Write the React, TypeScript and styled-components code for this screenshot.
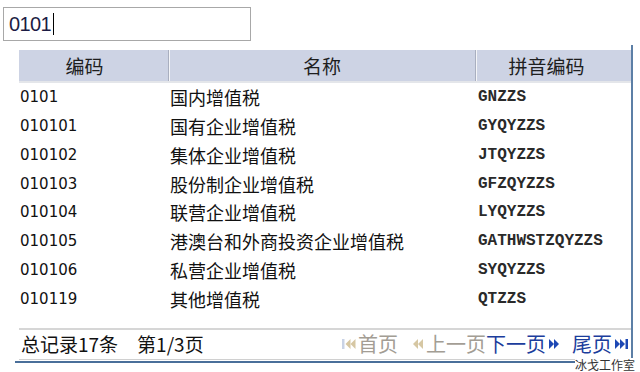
import React from 'react';
import styled, {createGlobalStyle} from 'styled-components';

const rows = [
  {code: '0101', name: '国内增值税', py: 'GNZZS'},
  {code: '010101', name: '国有企业增值税', py: 'GYQYZZS'},
  {code: '010102', name: '集体企业增值税', py: 'JTQYZZS'},
  {code: '010103', name: '股份制企业增值税', py: 'GFZQYZZS'},
  {code: '010104', name: '联营企业增值税', py: 'LYQYZZS'},
  {code: '010105', name: '港澳台和外商投资企业增值税', py: 'GATHWSTZQYZZS'},
  {code: '010106', name: '私营企业增值税', py: 'SYQYZZS'},
  {code: '010119', name: '其他增值税', py: 'QTZZS'},
];

const CJK = `"Noto Sans CJK SC", "Liberation Sans", sans-serif`;

function Arrows({dir, bar, off}: {dir: 'l' | 'r'; bar?: boolean; off?: boolean}) {
  const c = off ? '#d6c7a3' : '#1d48b4';
  const tri = dir === 'l'
    ? ['M6 1 L1 6 L6 11 Z', 'M11 1 L6 6 L11 11 Z']
    : ['M1 1 L6 6 L1 11 Z', 'M6 1 L11 6 L6 11 Z'];
  const w = bar ? 14 : 12;
  return (
    <svg width={w} height="12" viewBox={`0 0 ${w} 12`}>
      <g transform={bar && dir === 'l' ? 'translate(2.5 0)' : undefined}>
        {tri.map((d) => <path key={d} d={d} fill={c} />)}
      </g>
      {bar && <rect x={dir === 'l' ? 0 : 11.5} y="1" width="2.5" height="10" fill={off ? '#c9d3e6' : c} />}
    </svg>
  );
}

function App() {
  return (
    <Page>
      <GlobalStyle />
      <SearchBox>
        0101<Caret />
      </SearchBox>

      <Panel>
        <Inner>
          <HeadRow>
            <HeadCell $pr={18}>编码</HeadCell>
            <HeadCell>名称</HeadCell>
            <HeadCell $pr={14}>拼音编码</HeadCell>
          </HeadRow>

          <Body>
            {rows.map((r) => (
              <Row key={r.code}>
                <CodeCell>{r.code}</CodeCell>
                <NameCell>{r.name}</NameCell>
                <PyCell>{r.py}</PyCell>
              </Row>
            ))}
          </Body>

          <Footer>
            <Summary>
              <span>总记录17条</span>
              <span>第1/3页</span>
            </Summary>
            <Pager>
              <PageLink $off>
                <Arrows dir="l" bar off />首页
              </PageLink>
              <PageLink $off $gap={14}>
                <Arrows dir="l" off />上一页
              </PageLink>
              <PageLink>
                下一页<Arrows dir="r" />
              </PageLink>
              <PageLink $gap={12}>
                尾页<Arrows dir="r" bar />
              </PageLink>
            </Pager>
          </Footer>
        </Inner>
      </Panel>

      <Watermark>冰戈工作室</Watermark>
    </Page>
  );
}

const GlobalStyle = createGlobalStyle`
  body {
    margin: 0;
    background: #fff;
    font-family: "Liberation Sans", "Noto Sans CJK SC", sans-serif;
  }
`;

const Page = styled.div`
  position: relative;
  width: 640px;
  height: 372px;
  padding: 7px 0 0 3px;
  box-sizing: border-box;
  overflow: hidden;
`;

const SearchBox = styled.div`
  display: flex;
  align-items: center;
  width: 248px;
  height: 34px;
  box-sizing: border-box;
  border: 1px solid #a8a8a8;
  padding-left: 5px;
  font-size: 20px;
  letter-spacing: -0.6px;
  color: #1c1c44;
`;

const Caret = styled.span`
  display: inline-block;
  width: 1px;
  height: 22px;
  margin-left: 2px;
  background: #000;
`;

const Panel = styled.div`
  width: 618px;
  margin: 4px 0 0 12px;
  padding-top: 5px;
  box-sizing: border-box;
  border-right: 2px solid #5c7fa6;
  border-bottom: 2px solid #4a6f9a;
`;

const Inner = styled.div`
  margin-left: 4px;
`;

const Cols = `
  display: grid;
  grid-template-columns: 149px 307px 1fr;
`;

const HeadRow = styled.div`
  ${Cols}
  height: 31px;
  background: #cdd3e4;
  border-bottom: 2px solid #e4e6ea;
`;

const HeadCell = styled.div<{$pr?: number}>`
  display: flex;
  align-items: center;
  justify-content: center;
  padding-right: ${(p) => p.$pr || 0}px;
  font-family: ${CJK};
  font-size: 19px;
  color: #1e1e1e;
  & + & {
    border-left: 1px solid #a9afbf;
    box-shadow: inset 1px 0 0 #f4f5f8;
  }
`;

const Body = styled.div`
  padding-bottom: 15px;
`;

const Row = styled.div`
  ${Cols}
  height: 28.75px;
  align-items: center;
`;

const CodeCell = styled.div`
  padding-left: 1px;
  font-family: "DejaVu Sans", sans-serif;
  font-size: 15px;
  color: #111;
`;

const NameCell = styled.div`
  padding-left: 2px;
  font-family: ${CJK};
  font-size: 18px;
  color: #111;
  white-space: nowrap;
`;

const PyCell = styled.div`
  padding-left: 3px;
  font-family: "Liberation Mono", monospace;
  font-weight: bold;
  font-size: 16px;
  color: #2a2a2a;
`;

const Footer = styled.div`
  display: flex;
  align-items: center;
  justify-content: space-between;
  height: 32px;
  padding-bottom: 2px;
  box-sizing: border-box;
  border-top: 2px solid #d6d6d6;
  border-bottom: 1px solid #d0d0d0;
  margin-bottom: 1px;
  font-family: ${CJK};
  font-size: 19px;
  line-height: 22px;
`;

const Summary = styled.div`
  display: flex;
  gap: 19px;
  padding-left: 2px;
  color: #111;
`;

const Pager = styled.div`
  display: flex;
  align-items: center;
  padding-right: 3px;
  font-size: 20px;
`;

const PageLink = styled.span<{$off?: boolean; $gap?: number}>`
  display: inline-flex;
  align-items: center;
  gap: 2px;
  margin-left: ${(p) => p.$gap || 0}px;
  color: ${(p) => (p.$off ? '#a39d94' : '#1b3d9c')};
`;

const Watermark = styled.div`
  position: absolute;
  left: 575px;
  top: 358px;
  font-family: ${CJK};
  font-size: 12px;
  line-height: 14px;
  color: #333;
  background: #fff;
`;

export default App;
